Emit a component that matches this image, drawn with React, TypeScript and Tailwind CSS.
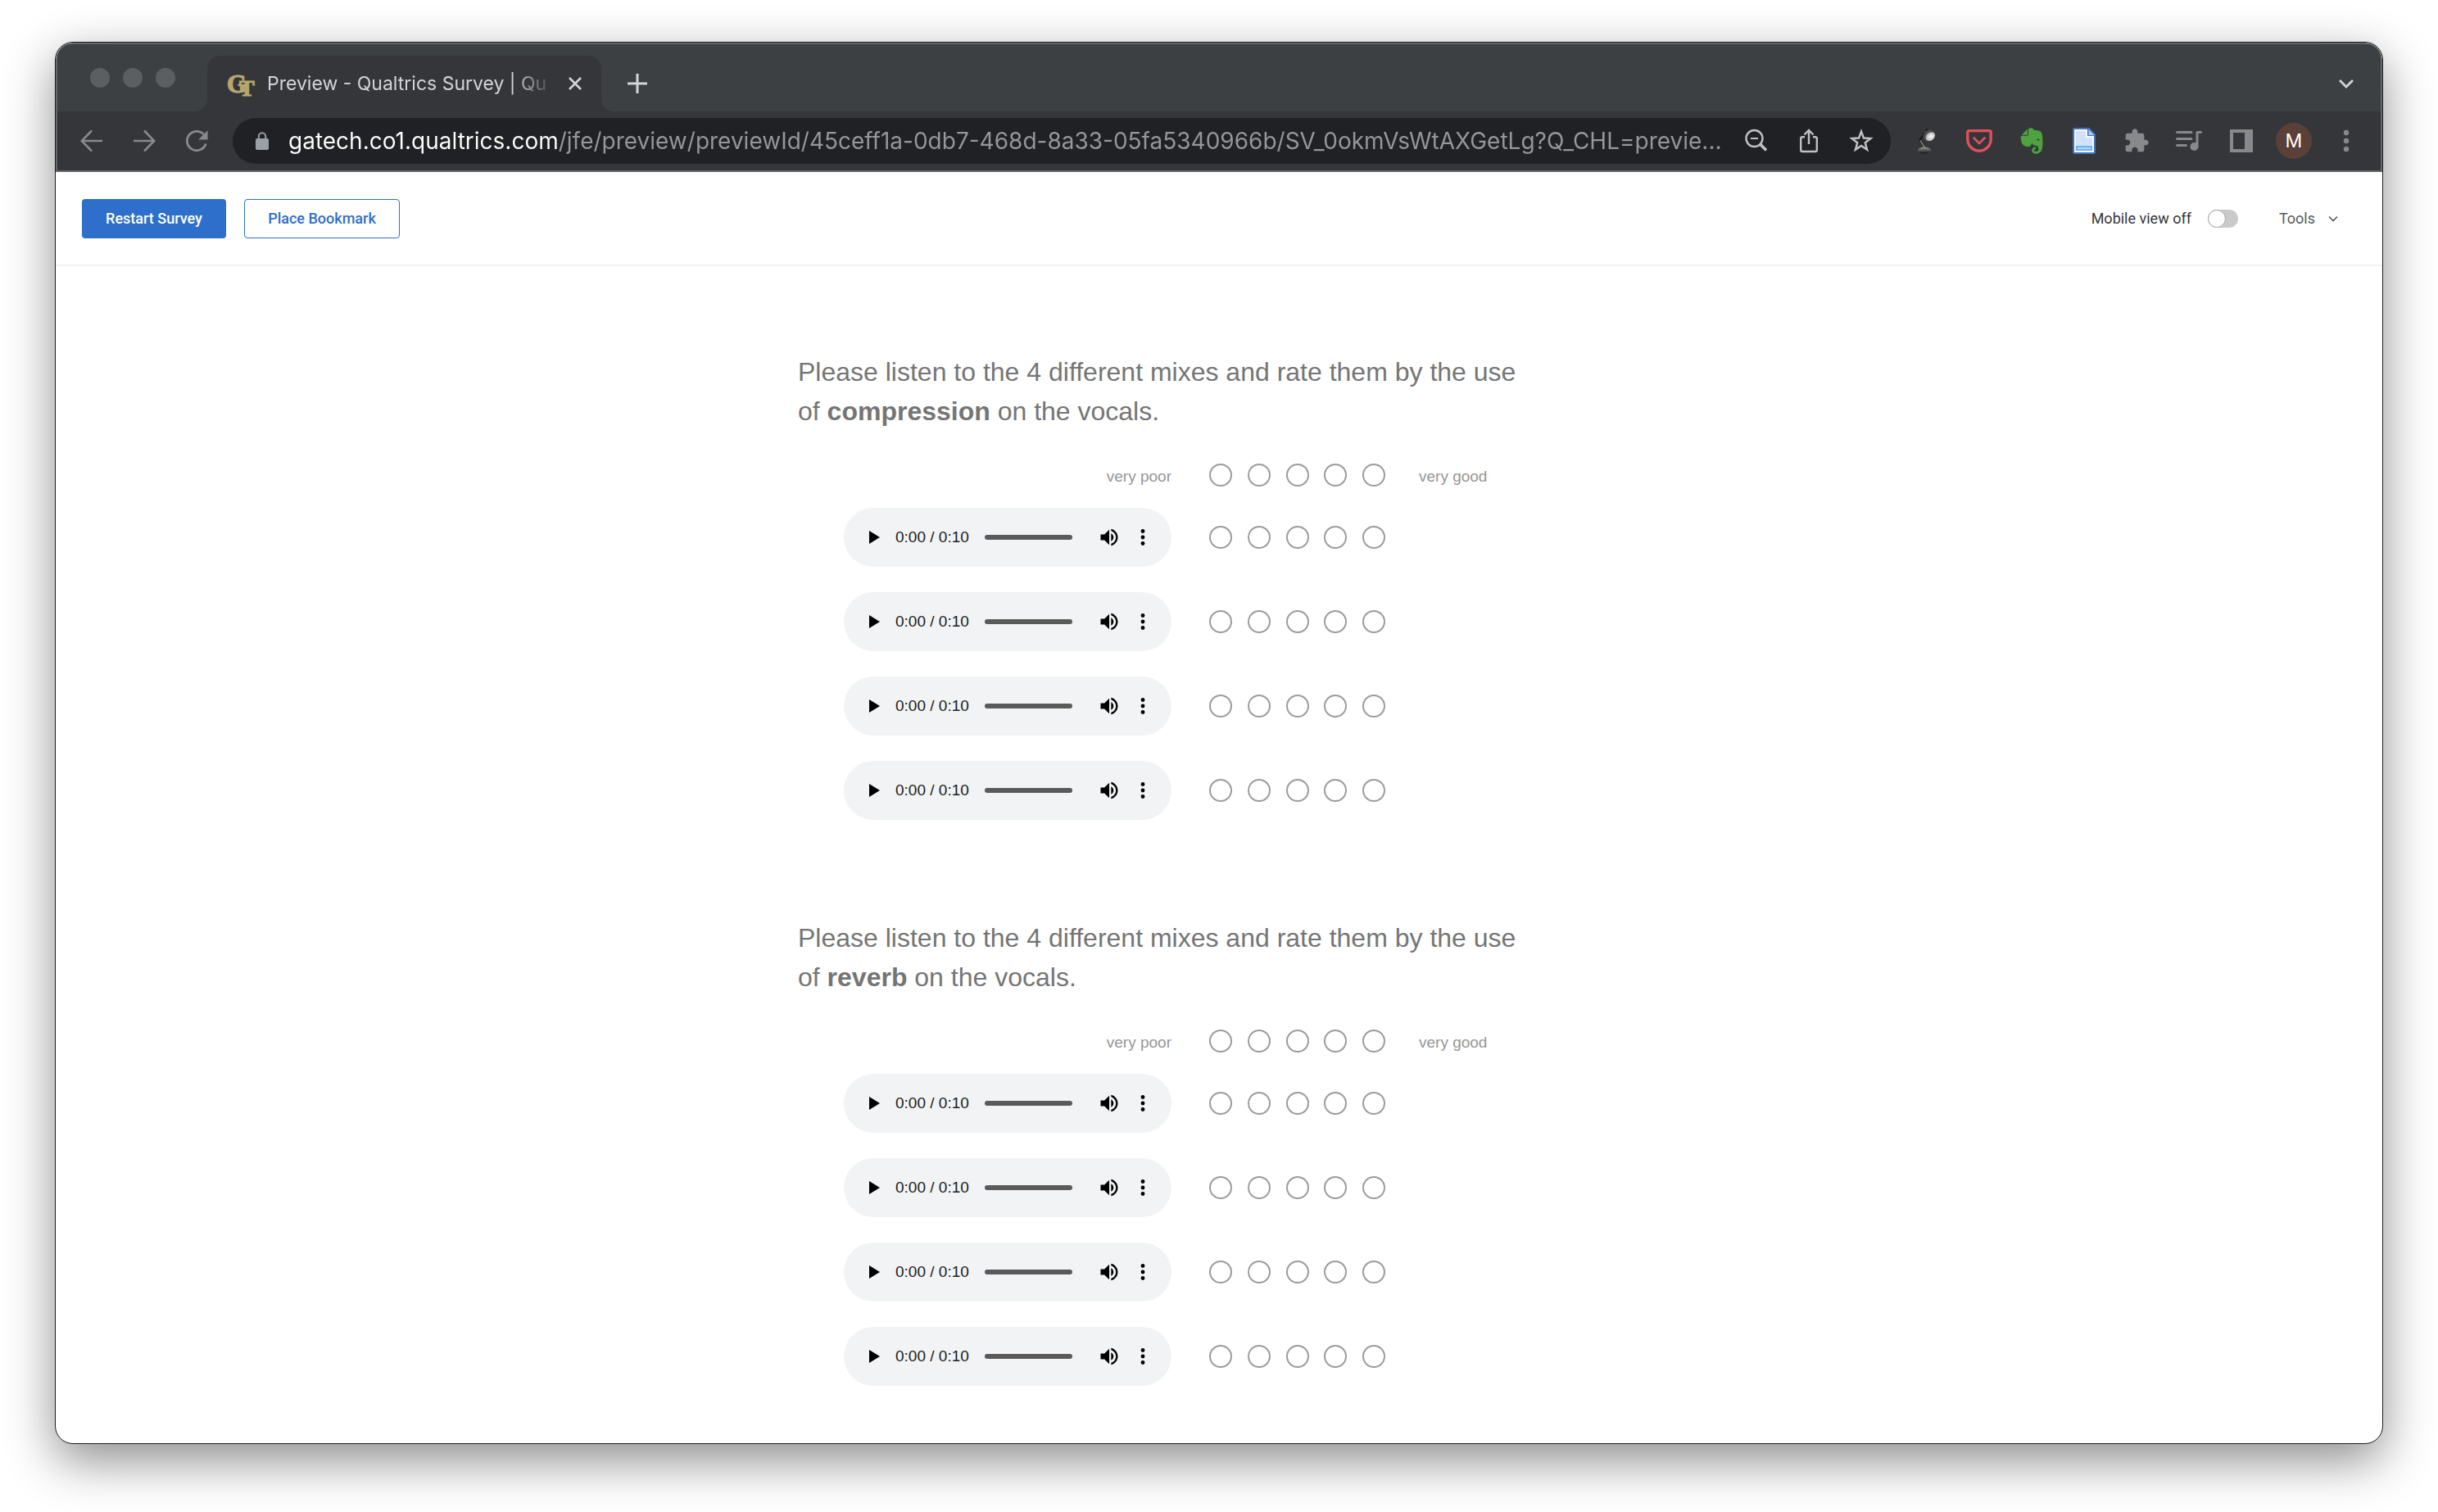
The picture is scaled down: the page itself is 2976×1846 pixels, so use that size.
import React from 'react'
import { FaEvernote } from 'react-icons/fa'

type IconProps = { className?: string }

const BackIcon = () => (
  <svg viewBox="0 0 32 32" className="size-8" fill="none" stroke="currentColor" strokeWidth="2.6">
    <path d="M29 16H4.500M16 3.500L3.800 16L16 28.500" />
  </svg>
)

const ForwardIcon = () => (
  <svg viewBox="0 0 32 32" className="size-8" fill="none" stroke="currentColor" strokeWidth="2.6">
    <path d="M3 16H27.500M16 3.500L28.200 16L16 28.500" />
  </svg>
)

const ReloadIcon = () => (
  <svg viewBox="0 0 32 32" className="size-8">
    <path d="M27.200 19.500A11.700 11.700 0 1 1 24.600 8" fill="none" stroke="currentColor" strokeWidth="2.8" />
    <path d="M29.500 3.200V14.500H18.200Z" fill="currentColor" />
  </svg>
)

const LockIcon = () => (
  <svg viewBox="0 0 24 24" className="size-6 shrink-0 text-[#9aa0a6]">
    <rect x="4" y="9" width="16" height="14" rx="1.800" fill="currentColor" />
    <path d="M7.800 10V6.500a4.200 4.200 0 0 1 8.400 0V10" fill="none" stroke="currentColor" strokeWidth="2" />
  </svg>
)

const ZoomOutIcon = () => (
  <svg viewBox="0 0 32 32" className="size-8" fill="none" stroke="currentColor">
    <circle cx="13.500" cy="13" r="10" strokeWidth="2.4" />
    <path d="M9 13h9" strokeWidth="2" />
    <path d="M20.500 20L28 27.500" strokeWidth="3.6" />
  </svg>
)

const ShareIcon = () => (
  <svg viewBox="0 0 32 32" className="size-8" fill="none" stroke="currentColor" strokeWidth="2.4">
    <path d="M11 11.200H8.200a2 2 0 0 0-2 2V27a2 2 0 0 0 2 2h15.600a2 2 0 0 0 2-2V13.200a2 2 0 0 0-2-2H21" />
    <path d="M16 20V3.500M10.500 8.500L16 3L21.500 8.500" />
  </svg>
)

const StarIcon = () => (
  <svg viewBox="0 0 32 32" className="size-8" fill="none" stroke="currentColor" strokeWidth="2.5">
    <path d="M16 4.600L19 12.600L27.400 13L20.800 18.300L23 26.600L16 21.900L9 26.600L11.200 18.300L4.600 13L13 12.600Z" />
  </svg>
)

const LampIcon = () => (
  <svg viewBox="0 0 32 32" className="size-8">
    <defs>
      <radialGradient id="bulb" cx="0.550" cy="0.550" r="0.600">
        <stop offset="0" stopColor="#ffffff" />
        <stop offset="1" stopColor="#a5a5a5" />
      </radialGradient>
      <linearGradient id="base" x1="0" y1="0" x2="0" y2="1">
        <stop offset="0" stopColor="#9a9a9a" />
        <stop offset="1" stopColor="#141414" />
      </linearGradient>
    </defs>
    <path d="M14 6L7.500 14.500L14.500 24.500" fill="none" stroke="#1b1b1b" strokeWidth="2.4" />
    <path d="M8 15.500L14 24.500" stroke="#a8a8a8" strokeWidth="1.200" />
    <path d="M14 3l2-2.500 2 3z" fill="#1b1b1b" />
    <ellipse cx="13" cy="27.500" rx="8" ry="4" fill="url(#base)" />
    <ellipse cx="19" cy="9.500" rx="7.800" ry="6.800" fill="#4c4c4c" transform="rotate(-35 19 9.500)" />
    <ellipse cx="20.300" cy="10.600" rx="6.200" ry="4.800" fill="url(#bulb)" transform="rotate(-38 20.300 10.600)" />
  </svg>
)

const PocketIcon = () => (
  <svg viewBox="0 0 32 32" className="size-8" fill="none" stroke="#e0505c" strokeLinejoin="round" strokeLinecap="round">
    <path d="M3.800 3.600H28.200a2 2 0 0 1 2 2V14a14.200 14.200 0 0 1-28.400 0V5.600a2 2 0 0 1 2-2Z" strokeWidth="3.4" />
    <path d="M9.500 12.500L16 19L22.500 12.500" strokeWidth="2.800" />
  </svg>
)

const DocumentIcon = () => (
  <svg viewBox="0 0 32 32" className="size-8">
    <path d="M2 2a2 2 0 0 1 2-2H22.500L30 8V30a2 2 0 0 1-2 2H4a2 2 0 0 1-2-2Z" fill="#4473bd" />
    <path d="M4 2H20V10H28V30H4Z" fill="#f5f9ff" />
    <path d="M5.800 4H18V12H26V22H5.800Z" fill="#d3e2fa" />
    <path d="M21.500 2L28.500 9H21.500Z" fill="#a9c8f2" />
    <rect x="5.800" y="22" width="20.200" height="6" fill="#6fb4f1" />
    <rect x="8" y="24.200" width="16" height="1.800" fill="#b5dcff" />
  </svg>
)

const PuzzleIcon = () => (
  <svg viewBox="0 0 24 24" className="size-8" fill="currentColor">
    <path d="M20.500 11H19V7c0-1.100-.9-2-2-2h-4V3.500C13 2.120 11.880 1 10.500 1S8 2.120 8 3.500V5H4c-1.100 0-1.990.9-1.990 2v3.800H3.500c1.490 0 2.700 1.210 2.700 2.700s-1.210 2.700-2.700 2.700H2V20c0 1.100.9 2 2 2h3.800v-1.500c0-1.490 1.210-2.700 2.700-2.700 1.490 0 2.700 1.210 2.700 2.700V22H17c1.100 0 2-.9 2-2v-4h1.500c1.380 0 2.500-1.120 2.500-2.500S21.880 11 20.500 11z" />
  </svg>
)

const PlaylistIcon = () => (
  <svg viewBox="0 0 32 32" className="size-8" stroke="currentColor" strokeWidth="3" strokeLinecap="round" fill="none">
    <path d="M1.500 5.500H19M1.500 13.500H19M1.500 21.500H12.500" />
    <path d="M30.500 5.500H26V23" strokeLinejoin="round" />
    <circle cx="22.500" cy="23" r="5" fill="currentColor" stroke="none" />
  </svg>
)

const SidePanelIcon = () => (
  <svg viewBox="0 0 32 32" className="size-8">
    <path fillRule="evenodd" d="M2 2H30V30H2ZM6 6V26H20V6Z" fill="currentColor" />
  </svg>
)

const KebabIcon = ({ className }: IconProps) => (
  <svg viewBox="0 0 24 24" className={className} fill="currentColor">
    <circle cx="12" cy="4.500" r="2.400" />
    <circle cx="12" cy="12" r="2.400" />
    <circle cx="12" cy="19.500" r="2.400" />
  </svg>
)

const VolumeIcon = () => (
  <svg viewBox="0 0 24 24" className="size-7" fill="currentColor">
    <path d="M3 9v6h4l5 5V4L7 9H3zm13.500 3c0-1.770-1.020-3.290-2.500-4.030v8.050c1.480-.73 2.500-2.250 2.500-4.020zM14 3.230v2.060c2.890.86 5 3.540 5 6.710s-2.110 5.850-5 6.710v2.060c4.010-.91 7-4.490 7-8.770s-2.990-7.860-7-8.770z" />
  </svg>
)

const SiteLogo = () => (
  <svg viewBox="0 0 32 32" className="size-8 shrink-0 overflow-visible" fill="#b8a66c" stroke="#b8a66c" aria-hidden="true">
    <text x="-1" y="27" fontSize="31" fontWeight="700" strokeWidth="1.200" fontFamily="Liberation Serif, serif">G</text>
    <text x="14" y="31" fontSize="28" fontWeight="700" strokeWidth="1.200" fontFamily="Liberation Serif, serif">T</text>
  </svg>
)

function ToolbarButton({ label, children }: { label: string; children: React.ReactNode }) {
  return (
    <button aria-label={label} className="flex h-14 w-16 shrink-0 items-center justify-center">
      {children}
    </button>
  )
}

function TabStrip() {
  return (
    <div className="flex h-[82px] items-center bg-[#3c4043] text-[#d3d4d6]">
      <div className="ml-10 flex gap-4">
        <button aria-label="Close window" className="size-6 rounded-full bg-[#5b5f61]" />
        <button aria-label="Minimize window" className="size-6 rounded-full bg-[#5b5f61]" />
        <button aria-label="Zoom window" className="size-6 rounded-full bg-[#5b5f61]" />
      </div>
      <div className="relative ml-[39px] flex h-[68px] w-[481px] items-center self-end rounded-t-[16px] bg-[#35363a] pr-6 pl-[25px] before:absolute before:bottom-0 before:-left-4 before:size-4 before:bg-[radial-gradient(circle_at_0_0,transparent_16px,#35363a_16px)] after:absolute after:-right-4 after:bottom-0 after:size-4 after:bg-[radial-gradient(circle_at_100%_0,transparent_16px,#35363a_16px)]">
        <SiteLogo />
        <span className="ml-4 w-[352px] overflow-hidden mask-r-from-85% text-[23px] leading-8 whitespace-nowrap">
          Preview - Qualtrics Survey | Qu
        </span>
        <button aria-label="Close tab" className="ml-auto">
          <svg viewBox="0 0 16 16" className="size-4" stroke="currentColor" strokeWidth="2.6">
            <path d="M1 1L15 15M15 1L1 15" />
          </svg>
        </button>
      </div>
      <button aria-label="New tab" className="ml-8 flex h-[68px] items-center self-end">
        <svg viewBox="0 0 24 24" className="size-6" stroke="currentColor" strokeWidth="3">
          <path d="M12 0V24M0 12H24" />
        </svg>
      </button>
      <button aria-label="Search tabs" className="mr-[33px] ml-auto flex h-[68px] items-center self-end">
        <svg viewBox="0 0 18 18" className="size-[18px]" fill="none" stroke="currentColor" strokeWidth="2.8">
          <path d="M1 5L9 13L17 5" />
        </svg>
      </button>
    </div>
  )
}

function Toolbar() {
  return (
    <div className="flex h-[72px] items-center bg-[#35363a] px-[10px] text-[#88898b]">
      <ToolbarButton label="Back"><BackIcon /></ToolbarButton>
      <ToolbarButton label="Forward"><ForwardIcon /></ToolbarButton>
      <ToolbarButton label="Reload"><ReloadIcon /></ToolbarButton>
      <div className="ml-3 flex h-14 min-w-0 flex-1 items-center rounded-full bg-[#202124] pr-1 pl-6 text-[#c0c1c2]">
        <LockIcon />
        <input
          type="text"
          aria-label="Address"
          defaultValue="gatech.co1.qualtrics.com/jfe/preview/previewId/45ceff1a-0db7-468d-8a33-05fa5340966b/SV_0okmVsWtAXGetLg?Q_CHL=previe..."
          className="ml-5 min-w-0 flex-1 bg-[linear-gradient(90deg,#ffffff_330px,#94989c_330px)] bg-clip-text text-[28px] text-transparent outline-none"
        />
        <ToolbarButton label="Zoom"><ZoomOutIcon /></ToolbarButton>
        <ToolbarButton label="Share"><ShareIcon /></ToolbarButton>
        <ToolbarButton label="Bookmark this tab"><StarIcon /></ToolbarButton>
      </div>
      <div className="ml-3 flex">
        <ToolbarButton label="Lamp extension"><LampIcon /></ToolbarButton>
        <ToolbarButton label="Save to Pocket"><PocketIcon /></ToolbarButton>
        <ToolbarButton label="Evernote Web Clipper"><FaEvernote className="size-9 text-[#4fa23f]" /></ToolbarButton>
        <ToolbarButton label="Document extension"><DocumentIcon /></ToolbarButton>
        <ToolbarButton label="Extensions"><PuzzleIcon /></ToolbarButton>
        <ToolbarButton label="Media controls"><PlaylistIcon /></ToolbarButton>
        <ToolbarButton label="Side panel"><SidePanelIcon /></ToolbarButton>
        <ToolbarButton label="Profile">
          <span className="flex size-11 items-center justify-center rounded-full bg-[#5a4037] text-[23px] text-white">M</span>
        </ToolbarButton>
        <ToolbarButton label="Menu"><KebabIcon className="size-8" /></ToolbarButton>
      </div>
    </div>
  )
}

function PreviewBar() {
  return (
    <div className="flex h-[115px] items-center border-b-2 border-[#f2f2f2] pr-[52px] pl-8 font-['Roboto',sans-serif] text-lg">
      <button className="h-12 w-44 rounded-[4px] bg-[#2d6fca] font-medium text-white">Restart Survey</button>
      <button className="ml-[22px] h-12 w-[190px] rounded-[4px] border border-[#2d6fca] font-medium text-[#2d6fca]">
        Place Bookmark
      </button>
      <label htmlFor="mobile-view" className="ml-auto text-[#32363a]">Mobile view off</label>
      <input
        id="mobile-view"
        type="checkbox"
        role="switch"
        className="ml-5 h-[22px] w-[37px] appearance-none rounded-full bg-[#cacaca] before:block before:size-[22px] before:rounded-full before:border before:border-[#a8a8a8] before:bg-white checked:bg-[#2d6fca] checked:before:ml-auto"
      />
      <button className="ml-[50px] flex items-center gap-[14px] text-[#555a60]">
        Tools
        <svg viewBox="0 0 16 16" className="size-4" fill="none" stroke="currentColor" strokeWidth="1.6">
          <path d="M3 5.500L8 10.500L13 5.500" />
        </svg>
      </button>
    </div>
  )
}

function AudioPlayer({ label }: { label: string }) {
  return (
    <div role="group" aria-label={label} className="ml-14 flex h-[72px] w-[400px] items-center rounded-full bg-[#f1f3f4] pr-[23px] pl-[31px] text-black">
      <button aria-label="Play">
        <svg viewBox="0 0 13 16" className="h-4 w-[13px]" fill="currentColor">
          <path d="M0 0L13 8L0 16Z" />
        </svg>
      </button>
      <span className="ml-[19px] w-[109px] text-[19px] whitespace-nowrap text-[#202020]">0:00 / 0:10</span>
      <input
        type="range"
        aria-label="Seek"
        defaultValue={0}
        className="h-[6px] w-0 flex-1 appearance-none rounded-full bg-[#5a5a5a] [&::-webkit-slider-thumb]:size-0 [&::-webkit-slider-thumb]:appearance-none"
      />
      <button aria-label="Mute" className="ml-[31px]"><VolumeIcon /></button>
      <button aria-label="More options" className="ml-[15px]"><KebabIcon className="size-6" /></button>
    </div>
  )
}

function RatingScale({ name, label }: { name: string; label: string }) {
  return (
    <div role="radiogroup" aria-label={label} className="mr-[41px] ml-[46px] flex w-[215px] justify-between">
      {[1, 2, 3, 4, 5].map((value) => (
        <input
          key={value}
          type="radio"
          name={name}
          value={value}
          aria-label={`${value} of 5`}
          className="size-7 appearance-none rounded-full border-2 border-[#9c9c9c] bg-white checked:border-8"
        />
      ))}
    </div>
  )
}

function Question({ topic }: { topic: string }) {
  return (
    <section>
      <h2 className="max-w-[900px] text-[32px] leading-[48px] text-[#757575]">
        Please listen to the 4 different mixes and rate them by the use of <strong>{topic}</strong> on the vocals.
      </h2>
      <div className="mt-10 flex items-end text-[19px] leading-6 text-[#969696]">
        <span className="w-[456px] text-right">very poor</span>
        <RatingScale name={`${topic}-scale`} label={`${topic} scale`} />
        <span>very good</span>
      </div>
      <div className="mt-[26px] flex flex-col gap-[31px]">
        {[1, 2, 3, 4].map((mix) => (
          <div key={mix} className="flex items-center">
            <AudioPlayer label={`Mix ${mix}`} />
            <RatingScale name={`${topic}-mix-${mix}`} label={`${topic}, mix ${mix}`} />
          </div>
        ))}
      </div>
    </section>
  )
}

export default function App() {
  return (
    <div className="flex min-h-screen flex-col bg-white px-[67px] pt-[51px] pb-[83px]">
      <div className="flex flex-1 flex-col overflow-hidden rounded-[22px] border border-[#1c1c1c] bg-white shadow-[0_20px_60px_rgba(0,0,0,0.45)]">
        <header className="rounded-t-[20px] border-2 border-[#65686a] bg-[#3c4043] font-['Inter',sans-serif]">
          <div className="overflow-hidden rounded-t-[19px]">
            <TabStrip />
            <Toolbar />
          </div>
        </header>
        <PreviewBar />
        <main className="mx-auto flex w-full max-w-[1028px] flex-col gap-[120px] pt-[105px] pb-16 font-['Liberation_Sans',Arial,sans-serif]">
          <Question topic="compression" />
          <Question topic="reverb" />
        </main>
      </div>
    </div>
  )
}
